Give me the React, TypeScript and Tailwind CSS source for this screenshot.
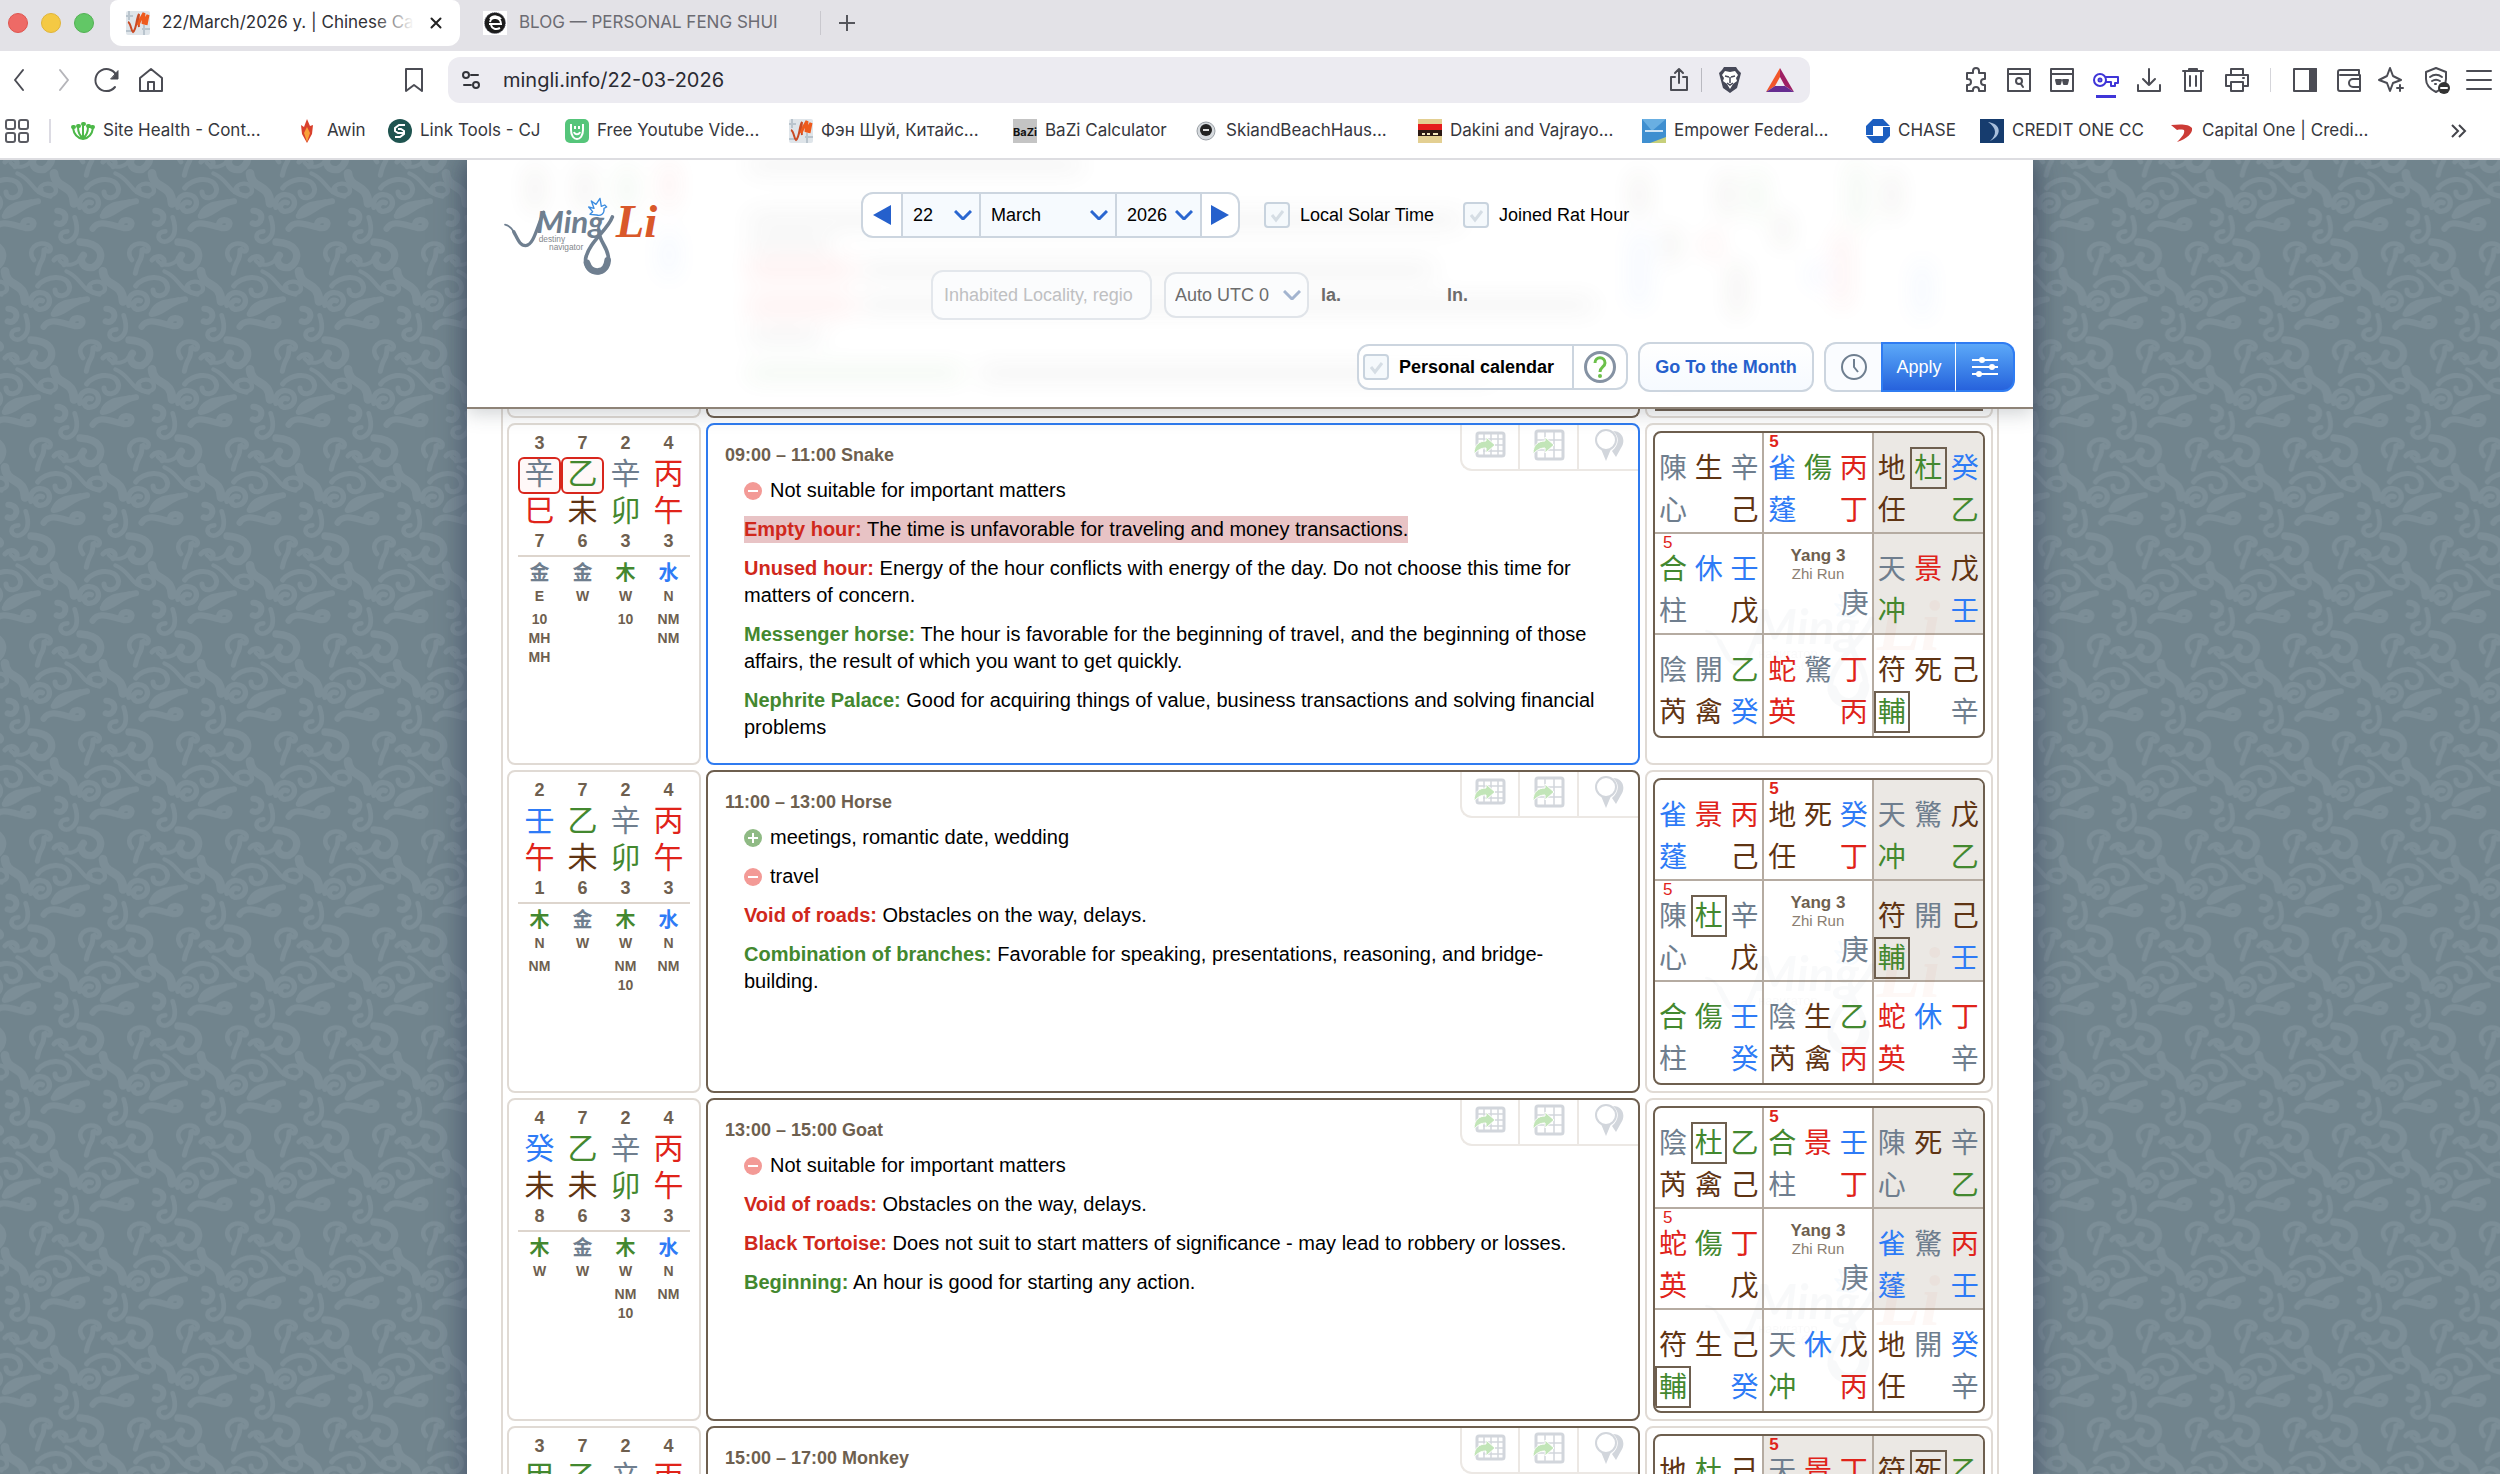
import { ReactNode } from 'react';
import clsx from 'clsx';

const CHAR_COLORS: Record<string, string> = {
  'text-[#6f7e8e]': '辛庚陳心柱陰開驚天金',
  'text-[#5f3413]': '生己戊地任符死芮禽未',
  'text-[#2e7bf6]': '壬癸雀蓬休水',
  'text-[#43882f]': '乙甲傷杜合冲輔卯木',
  'text-[#e0231a]': '丙丁巳午景蛇英',
};

const colorOf = (char: string) =>
  Object.keys(CHAR_COLORS).find((cls) => CHAR_COLORS[cls].includes(char)) ?? '';

interface Pillar {
  top: string;
  stem: string;
  branch: string;
  bottom: string;
  element: string;
  marks: string[];
  boxed?: boolean;
}

interface Note {
  kind: 'good' | 'bad' | 'plus' | 'minus';
  label?: string;
  text: string;
  highlight?: boolean;
}

interface Palace {
  rows: string[];
  five?: 'bold' | 'plain';
  shaded?: boolean;
  boxed?: string;
}

interface Hour {
  title: string;
  active?: boolean;
  pillars: Pillar[];
  notes: Note[];
  palaces: Palace[];
}

const DAY: Pillar = { top: '7', stem: '乙', branch: '未', bottom: '6', element: '金', marks: ['W'] };
const MONTH: Pillar = { top: '2', stem: '辛', branch: '卯', bottom: '3', element: '木', marks: ['W', 'NM', '10'] };
const YEAR: Pillar = { top: '4', stem: '丙', branch: '午', bottom: '3', element: '水', marks: ['N', 'NM'] };

// palace rows are three columns wide, a space is an empty column
const HOURS: Hour[] = [
  {
    title: '09:00 – 11:00 Snake',
    active: true,
    pillars: [
      { top: '3', stem: '辛', branch: '巳', bottom: '7', element: '金', marks: ['E', '10', 'MH', 'MH'], boxed: true },
      { ...DAY, boxed: true },
      { ...MONTH, marks: ['W', '10'] },
      { ...YEAR, marks: ['N', 'NM', 'NM'] },
    ],
    notes: [
      { kind: 'minus', text: 'Not suitable for important matters' },
      { kind: 'bad', label: 'Empty hour:', text: 'The time is unfavorable for traveling and money transactions.', highlight: true },
      { kind: 'bad', label: 'Unused hour:', text: 'Energy of the hour conflicts with energy of the day. Do not choose this time for matters of concern.' },
      { kind: 'good', label: 'Messenger horse:', text: 'The hour is favorable for the beginning of travel, and the beginning of those affairs, the result of which you want to get quickly.' },
      { kind: 'good', label: 'Nephrite Palace:', text: 'Good for acquiring things of value, business transactions and solving financial problems' },
    ],
    palaces: [
      { rows: ['陳生辛', '心 己'] },
      { rows: ['雀傷丙', '蓬 丁'], five: 'bold' },
      { rows: ['地杜癸', '任 乙'], shaded: true, boxed: '杜' },
      { rows: ['合休壬', '柱 戊'], five: 'plain' },
      { rows: [] },
      { rows: ['天景戊', '冲 壬'], shaded: true },
      { rows: ['陰開乙', '芮禽癸'] },
      { rows: ['蛇驚丁', '英 丙'] },
      { rows: ['符死己', '輔 辛'], boxed: '輔' },
    ],
  },
  {
    title: '11:00 – 13:00 Horse',
    pillars: [
      { top: '2', stem: '壬', branch: '午', bottom: '1', element: '木', marks: ['N', 'NM'] },
      DAY,
      MONTH,
      YEAR,
    ],
    notes: [
      { kind: 'plus', text: 'meetings, romantic date, wedding' },
      { kind: 'minus', text: 'travel' },
      { kind: 'bad', label: 'Void of roads:', text: 'Obstacles on the way, delays.' },
      { kind: 'good', label: 'Combination of branches:', text: 'Favorable for speaking, presentations, reasoning, and bridge-building.' },
    ],
    palaces: [
      { rows: ['雀景丙', '蓬 己'] },
      { rows: ['地死癸', '任 丁'], five: 'bold' },
      { rows: ['天驚戊', '冲 乙'], shaded: true },
      { rows: ['陳杜辛', '心 戊'], five: 'plain', boxed: '杜' },
      { rows: [] },
      { rows: ['符開己', '輔 壬'], shaded: true, boxed: '輔' },
      { rows: ['合傷壬', '柱 癸'] },
      { rows: ['陰生乙', '芮禽丙'] },
      { rows: ['蛇休丁', '英 辛'] },
    ],
  },
  {
    title: '13:00 – 15:00 Goat',
    pillars: [
      { top: '4', stem: '癸', branch: '未', bottom: '8', element: '木', marks: ['W'] },
      DAY,
      MONTH,
      YEAR,
    ],
    notes: [
      { kind: 'minus', text: 'Not suitable for important matters' },
      { kind: 'bad', label: 'Void of roads:', text: 'Obstacles on the way, delays.' },
      { kind: 'bad', label: 'Black Tortoise:', text: 'Does not suit to start matters of significance - may lead to robbery or losses.' },
      { kind: 'good', label: 'Beginning:', text: 'An hour is good for starting any action.' },
    ],
    palaces: [
      { rows: ['陰杜乙', '芮禽己'], boxed: '杜' },
      { rows: ['合景壬', '柱 丁'], five: 'bold' },
      { rows: ['陳死辛', '心 乙'], shaded: true },
      { rows: ['蛇傷丁', '英 戊'], five: 'plain' },
      { rows: [] },
      { rows: ['雀驚丙', '蓬 壬'], shaded: true },
      { rows: ['符生己', '輔 癸'], boxed: '輔' },
      { rows: ['天休戊', '冲 丙'] },
      { rows: ['地開癸', '任 辛'] },
    ],
  },
  {
    title: '15:00 – 17:00 Monkey',
    pillars: [
      { top: '3', stem: '甲', branch: '', bottom: '', element: '', marks: [] },
      { ...DAY, branch: '', bottom: '', element: '', marks: [] },
      { ...MONTH, branch: '', bottom: '', element: '', marks: [] },
      { ...YEAR, branch: '', bottom: '', element: '', marks: [] },
    ],
    notes: [],
    palaces: [
      { rows: ['地杜己'] },
      { rows: ['天景丁'], five: 'bold', shaded: true },
      { rows: ['符死乙'], shaded: true, boxed: '死' },
    ],
  },
];

/* ---------- browser chrome ---------- */

const Glyph = ({ children }: { children: ReactNode }) => (
  <svg
    viewBox="0 0 28 28"
    className="h-7 w-7 shrink-0"
    fill="none"
    stroke="currentColor"
    strokeWidth="2"
    strokeLinecap="round"
    strokeLinejoin="round"
  >
    {children}
  </svg>
);

interface ToolButtonProps {
  label: string;
  className?: string;
  marked?: boolean;
  children: ReactNode;
}

const ToolButton = ({ label, className, marked, children }: ToolButtonProps) => (
  <button type="button" aria-label={label} className={clsx('relative flex shrink-0 items-center justify-center', className)}>
    <Glyph>{children}</Glyph>
    {marked && <span className="absolute -bottom-1 h-[3px] w-5 bg-current" />}
  </button>
);

const MingIcon = () => (
  <svg viewBox="0 0 24 24" className="h-6 w-6 shrink-0">
    <rect width="24" height="24" rx="2" fill="#dfe5ea" />
    <path d="M0 5h7M3 0v9M16 18h8M18 14v10M0 20h6" stroke="#b9c4cd" strokeWidth="2" />
    <path d="M2 11c3 1 3 9 5 10 4-3 3-14 6-18-1 7-1 9 0 13" fill="none" stroke="#c94a24" strokeWidth="2" />
    <path d="M12 14c2-5 4-9 6-12l-1 11c2-3 3-6 5-9l-2 10" fill="none" stroke="#ee5a1d" strokeWidth="3" />
  </svg>
);

const TabBar = () => (
  <div className="flex h-[51px] items-start bg-[#e3e2e7] pl-2">
    <div className="mr-4 flex h-[46px] items-center gap-[13px]">
      <span className="h-5 w-5 rounded-full border border-[#df554f] bg-[#ee6a66]" />
      <span className="h-5 w-5 rounded-full border border-[#e0b43a] bg-[#f4c944]" />
      <span className="h-5 w-5 rounded-full border border-[#52b153] bg-[#62c766]" />
    </div>
    <div className="flex h-[46px] w-[350px] items-center rounded-b-xl rounded-t-lg bg-white pl-4 pr-3">
      <MingIcon />
      <span className="relative ml-3 w-[252px] overflow-hidden whitespace-nowrap text-[17px] text-[#2f3036]">
        22/March/2026 y. | Chinese Ca
        <span className="absolute inset-y-0 right-0 w-10 bg-gradient-to-r from-white/0 to-white" />
      </span>
      <button type="button" aria-label="Close tab" className="ml-4">
        <svg viewBox="0 0 12 12" className="h-3 w-3" stroke="#222" strokeWidth="2" strokeLinecap="round">
          <path d="M1.500 1.500l9 9M10.500 1.500l-9 9" />
        </svg>
      </button>
    </div>
    <div className="flex h-[46px] w-[360px] items-center pl-[23px]">
      <svg viewBox="0 0 24 24" className="h-6 w-6 shrink-0">
        <rect width="24" height="24" fill="#fff" />
        <circle cx="12" cy="12" r="10.500" fill="#1c1c1c" stroke="#667" strokeDasharray="1 1" />
        <path d="M6 13h12c0-7-10-8-11-2M7 8c3-4 9-3 11 0M17 17c-4 2-8 1-9-3" fill="none" stroke="#fff" strokeWidth="2" />
      </svg>
      <span className="ml-3 text-[17px] text-[#6c6c73]">BLOG — PERSONAL FENG SHUI</span>
    </div>
    <div className="flex h-[46px] items-center">
      <span className="h-6 w-px bg-[#c9c8ce]" />
      <button type="button" aria-label="New tab" className="ml-[18px]">
        <svg viewBox="0 0 16 16" className="h-4 w-4" stroke="#55565c" strokeWidth="2">
          <path d="M8 0v16M0 8h16" />
        </svg>
      </button>
    </div>
  </div>
);

const Toolbar = () => (
  <div className="flex h-[58px] items-center bg-white text-[#4b4c54]">
    <ToolButton label="Back" className="w-10">
      <path d="M17 4L9 14l8 10" />
    </ToolButton>
    <ToolButton label="Forward" className="w-[46px] text-[#b5b5ba]">
      <path d="M11 4l8 10-8 10" />
    </ToolButton>
    <ToolButton label="Reload" className="w-[42px]">
      <path d="M22 21a11 11 0 1 1 2-10" />
      <path d="M25 5v8h-7z" fill="currentColor" strokeWidth="1" />
    </ToolButton>
    <ToolButton label="Home" className="w-[46px]">
      <path d="M3 12L14 3l11 9v13H3zM11 25v-9h6v9" />
    </ToolButton>
    <ToolButton label="Bookmark this page" className="ml-auto mr-5 w-7">
      <path d="M6 3h16v22l-8-6-8 6z" />
    </ToolButton>
    <div className="flex h-[46px] w-[1362px] items-center rounded-xl bg-[#ecebf1] pl-[13px] pr-4">
      <svg viewBox="0 0 20 20" className="h-5 w-5 shrink-0" fill="none" stroke="#33343a" strokeWidth="2" strokeLinecap="round">
        <circle cx="5" cy="5" r="3" />
        <path d="M10 5h7M3 15h7" />
        <circle cx="15" cy="15" r="3" />
      </svg>
      <label htmlFor="address" className="sr-only">
        Address
      </label>
      <input
        id="address"
        defaultValue="mingli.info/22-03-2026"
        className="ml-[22px] min-w-0 flex-1 bg-transparent text-xl text-[#2b2c33] outline-none"
      />
      <ToolButton label="Share" className="w-7">
        <path d="M10 11H6v13h16V11h-4M14 17V3M10 7l4-4 4 4" />
      </ToolButton>
      <span className="ml-2 h-6 w-px bg-[#b9b9c0]" />
      <button type="button" aria-label="Brave Shields" className="ml-4">
        <svg viewBox="0 0 24 28" className="h-7 w-6">
          <path d="M6 1h12l2 3 3 3-1 4-3 11-7 5-7-5L2 11 1 7l3-3z" fill="#464858" />
          <path d="M12 6l5-1 3 4-2 3 1 3-4 3-3 5-3-5-4-3 1-3-2-3 3-4z" fill="#fff" />
          <path d="M7 10l4 1M17 10l-4 1M12 11v6M9 17l3 2 3-2" stroke="#464858" strokeWidth="1.500" fill="none" />
        </svg>
      </button>
      <button type="button" aria-label="Brave Rewards" className="ml-6">
        <svg viewBox="0 0 28 24" className="h-6 w-7">
          <path d="M14 0L0 24l9-6 5-9z" fill="#f1552b" />
          <path d="M14 0l14 24-9-6-5-9z" fill="#9e1f63" />
          <path d="M0 24h28l-9-6H9z" fill="#662d91" />
        </svg>
      </button>
    </div>
    <div className="ml-[145px] flex items-center">
      <ToolButton label="Extensions" className="w-[42px]">
        <path d="M5 7h6V5a3 3 0 0 1 6 0v2h6v6h-1a3 3 0 0 0 0 6h1v6h-6v-1a3 3 0 0 0-6 0v1H5v-6h1a3 3 0 0 0 0-6H5z" />
      </ToolButton>
      <ToolButton label="Search tabs" className="w-[43px]">
        <path d="M3 3h22v22H3zM3 8h22" />
        <circle cx="14" cy="15" r="3" />
        <path d="M16 18l2 3" />
      </ToolButton>
      <ToolButton label="Private window" className="w-[44px]">
        <path d="M3 3h22v22H3zM3 8h22" />
        <path d="M8 14h5l-1 4H9zM15 14h5l-1 4h-3z" fill="currentColor" />
      </ToolButton>
      <ToolButton label="Passwords" marked className="w-[43px] text-[#3f35d8]">
        <circle cx="8" cy="14" r="6" />
        <circle cx="8" cy="14" r="1.500" />
        <path d="M14 11h12v6h-3v3h-4v-4h-5" />
      </ToolButton>
      <ToolButton label="Downloads" className="w-[44px]">
        <path d="M14 3v16M8 13l6 6 6-6M3 19v6h22v-6" />
      </ToolButton>
      <ToolButton label="Delete" className="w-[44px]">
        <path d="M4 5h20M10 5V3h8v2M6 5v20h16V5M11 10v10M17 10v10" />
      </ToolButton>
      <ToolButton label="Print" className="w-[43px]">
        <path d="M8 9V3h12v6M8 20H3V9h22v11h-5M8 16h12v9H8zM20 12h1" />
      </ToolButton>
      <span className="mx-3 h-6 w-px bg-[#d5d5da]" />
      <ToolButton label="Sidebar" className="w-[44px]">
        <path d="M3 3h22v22H3z" />
        <path d="M19 3h6v22h-6z" fill="currentColor" />
      </ToolButton>
      <ToolButton label="Wallet" className="w-[43px]">
        <path d="M24 9V4H5a2 2 0 0 0-2 2v17a2 2 0 0 0 2 2h20V9H5M25 13h-7a4 4 0 0 0 0 8h7" />
      </ToolButton>
      <ToolButton label="Leo" className="w-[44px]">
        <path d="M12 2l3 8 8 4-8 3-3 8-3-8-8-3 8-4zM22 19v6M19 22h6" />
      </ToolButton>
      <ToolButton label="VPN" className="w-[44px]">
        <path d="M14 2l10 4v7c0 6-4 10-10 13C8 23 4 19 4 13V6zM8 11c4-3 8-3 12 0M10 15c3-2 5-2 8 0M13 18h1" />
        <circle cx="22" cy="22" r="6" fill="#333" stroke="none" />
        <path d="M19 22h6" stroke="#fff" />
      </ToolButton>
      <ToolButton label="Menu" className="w-[42px]">
        <path d="M2 5h24M2 14h24M2 23h24" />
      </ToolButton>
    </div>
  </div>
);

const FAVICONS: Record<string, ReactNode> = {
  site: (
    <g fill="none" stroke="#4cb848" strokeWidth="2" strokeLinecap="round">
      <path d="M2 9c1 7 4 10 10 11 6-1 9-4 10-11M7 8c0 6 2 9 5 11 3-2 5-5 5-11M12 7v12" />
      <path d="M2 8h1M7 7h1M12 5h1M17 7h1M21 8h1" strokeWidth="4" />
    </g>
  ),
  awin: (
    <>
      <path d="M12 0l3 7 3-1-1 9-5 9-5-9-1-9 3 2z" fill="#d9402c" />
      <path d="M12 8l3 6-3 9-3-9z" fill="#f9a13a" />
    </>
  ),
  cj: (
    <>
      <circle cx="12" cy="12" r="12" fill="#1f5450" />
      <path d="M17 6h-6l-4 3v3l3 2h5M7 18h5l4-3v-3l-3-2h-3" fill="none" stroke="#fff" strokeWidth="2" />
    </>
  ),
  free: (
    <>
      <rect width="24" height="24" rx="5" fill="#55c57a" />
      <path d="M6 5v6c0 12 12 12 12 0V5M10 7v3M14 7v3M9 13c1 3 5 3 6 0" fill="none" stroke="#fff" strokeWidth="2" />
    </>
  ),
  bazi: (
    <>
      <rect width="24" height="24" fill="#c4c4c4" />
      <text x="12" y="17" fontSize="11" fontWeight="700" textAnchor="middle" fill="#111">
        BaZi
      </text>
    </>
  ),
  ski: (
    <>
      <circle cx="12" cy="12" r="9" fill="#d6dade" stroke="#9aa0a6" />
      <circle cx="12" cy="11" r="6" fill="#222" />
      <path d="M9 11h6" stroke="#ddd" strokeWidth="2" />
    </>
  ),
  dakini: (
    <>
      <rect width="24" height="24" fill="#e3cf92" />
      <path d="M0 5h24v6H0z" fill="#e51c1c" />
      <path d="M0 11h24v6H0z" fill="#2c1a14" />
      <path d="M4 15h3M9 15h3M15 15h5" stroke="#f4e7bd" strokeWidth="2" />
    </>
  ),
  empower: (
    <>
      <rect width="24" height="24" fill="#3f8fd0" />
      <path d="M0 0h24L10 12z" fill="#69afe2" />
      <path d="M8 24l16-6v6z" fill="#c6cf7a" />
      <path d="M3 12h18" stroke="#cfe4f5" strokeWidth="2" />
    </>
  ),
  chase: (
    <>
      <path d="M7 0h10l7 7H7zM24 8v9l-7 7V8zM17 24H7l-7-7h17zM0 16V7l7-7v16z" fill="#1d5fc0" />
      <path d="M8 8h8v8H8z" fill="#fff" />
    </>
  ),
  credit: (
    <>
      <rect width="24" height="24" fill="#163c6e" />
      <path d="M8 3c14 2 14 14 2 19 7-6 7-13-2-19z" fill="#a9bfdb" />
    </>
  ),
  capital: <path d="M1 6c10-1 18-1 21 3 1 5-5 11-15 14 6-6 8-9 7-12-4-1-7 0-7 0z" fill="#cc3b36" />,
};

const BOOKMARKS = [
  { icon: 'site', name: 'Site Health - Cont...', width: 'w-[224px]' },
  { icon: 'awin', name: 'Awin', width: 'w-[93px]' },
  { icon: 'cj', name: 'Link Tools - CJ', width: 'w-[177px]' },
  { icon: 'free', name: 'Free Youtube Vide...', width: 'w-[224px]' },
  { icon: 'ming', name: 'Фэн Шуй, Китайс...', width: 'w-[224px]' },
  { icon: 'bazi', name: 'BaZi Calculator', width: 'w-[181px]' },
  { icon: 'ski', name: 'SkiandBeachHaus...', width: 'w-[224px]' },
  { icon: 'dakini', name: 'Dakini and Vajrayo...', width: 'w-[224px]' },
  { icon: 'empower', name: 'Empower Federal...', width: 'w-[224px]' },
  { icon: 'chase', name: 'CHASE', width: 'w-[114px]' },
  { icon: 'credit', name: 'CREDIT ONE CC', width: 'w-[190px]' },
  { icon: 'capital', name: 'Capital One | Credi...', width: 'w-[224px]' },
];

const BookmarksBar = () => (
  <nav className="flex h-[51px] items-center border-b-2 border-[#dddde1] bg-white pb-[6px] text-[17px] text-[#36373d]">
    <svg viewBox="0 0 24 24" className="ml-[5px] h-6 w-6 shrink-0" fill="none" stroke="#5a5b62" strokeWidth="2">
      <rect x="1" y="1" width="9" height="9" rx="2" />
      <rect x="14" y="1" width="9" height="9" rx="2" />
      <rect x="1" y="14" width="9" height="9" rx="2" />
      <rect x="14" y="14" width="9" height="9" rx="2" />
    </svg>
    <span className="ml-5 mr-5 h-6 w-[2px] bg-[#dcdbe3]" />
    {BOOKMARKS.map((b) => (
      <a key={b.name} href={`#${b.icon}`} className={clsx('flex shrink-0 items-center gap-2 whitespace-nowrap', b.width)}>
        {b.icon === 'ming' ? (
          <MingIcon />
        ) : (
          <svg viewBox="0 0 24 24" className="h-6 w-6 shrink-0">
            {FAVICONS[b.icon]}
          </svg>
        )}
        {b.name}
      </a>
    ))}
    <button type="button" aria-label="More bookmarks" className="ml-auto mr-[33px]">
      <svg viewBox="0 0 16 14" className="h-[14px] w-4" fill="none" stroke="#44454b" strokeWidth="2">
        <path d="M1 1l6 6-6 6M8 1l6 6-6 6" />
      </svg>
    </button>
  </nav>
);

/* ---------- page ---------- */

const Swirls = () => (
  <g fill="none" stroke="#7c8e97" strokeLinecap="round" strokeWidth="15">
    <path d="M112 88c-4 22 42 24 44 4 0-30-50-28-52 4" strokeWidth="13" />
    <path d="M262 128c-22-8-30 26-6 26 40-4 34-54-4-50-18 2-30 20-24 38" strokeWidth="16" />
    <path d="M150 40c4 50 60 30 60 90" strokeWidth="26" />
    <path d="M248 84c20-30 90-40 96 4 0 30-44 34-44 8" />
    <path d="M296 168c30 0 60-40 100-44M300 160c16-30 50-26 76-34" strokeWidth="18" />
    <path d="M266 206c24-40 90 10 110-4 22-20-20-30-24-12" strokeWidth="19" />
    <path d="M160 152c40 2 24 50-2 38" strokeWidth="18" />
    <path d="M190 214c-30 0-26 36 4 30 34-14 24-54 18-72" strokeWidth="14" />
    <path d="M90 300c-24-30 10-60 40-46 20 10 6 30-6 14" strokeWidth="14" />
    <path d="M228 246c80 6 70 60 40 76-30 6-44-20-30-36" strokeWidth="22" />
    <path d="M20 8c20 24 60 8 60-8M40 40c50 20 40 60 100 70" strokeWidth="12" />
    <path d="M150 300c20-24 50 0 30 14M100 340c10-50 20-30 20-70" strokeWidth="15" />
  </g>
);

const SWIRL_OFFSETS = [
  [0, 0],
  [-294, 0],
  [147, 294],
  [-147, 294],
  [-441, 294],
  [147, -294],
  [-147, -294],
];

const Backdrop = () => (
  <svg className="absolute inset-0 h-full w-full" aria-hidden="true">
    <defs>
      <pattern id="swirl" width="294" height="588" patternUnits="userSpaceOnUse" patternTransform="translate(4 0) scale(0.3333)">
        <rect width="294" height="588" fill="#71848d" />
        {SWIRL_OFFSETS.map(([x, y]) => (
          <g key={`${x},${y}`} transform={`translate(${x} ${y})`}>
            <Swirls />
          </g>
        ))}
      </pattern>
    </defs>
    <rect width="100%" height="100%" fill="url(#swirl)" />
  </svg>
);

const Logo = ({ className, lines }: { className?: string; lines: [string, string] }) => (
  <svg viewBox="0 0 540 300" className={className} role="img" aria-label="Ming Li">
    <g fill="none" stroke="#6f7f90" strokeLinecap="round">
      <path d="M30 119c12 2 20 10 28 24" strokeWidth="5" />
      <path d="M56 140c12 22 18 42 36 42 24-2 32-50 54-100" strokeWidth="10" />
      <path d="M352 96c-14 40-70 74-80 124-6 60 74 56 68-4-4-34-26-44-28-76" strokeWidth="11" />
      <path d="M276 234c12 36 58 34 62-8" strokeWidth="20" />
    </g>
    <text x="124" y="144" fontSize="94" fontStyle="italic" fontWeight="700" fill="#6f7f90" fontFamily="Lato, sans-serif">
      Ming
    </text>
    <text x="362" y="155" fontSize="140" fontStyle="italic" fontWeight="700" fill="#d9582a" fontFamily="'Liberation Serif', serif">
      Li
    </text>
    <path
      d="M281 66l16 4-8-22 14 10 12-18 4 24 10-4 6 6-8 4c2 16-10 24-22 20l-20-2 8-8z"
      fill="#fff"
      stroke="#3b8ce0"
      strokeWidth="4"
      strokeLinejoin="round"
    />
    <g fill="#84878c" fontSize="25" fontFamily="'Liberation Sans', sans-serif">
      <text x="131" y="171">{lines[0]}</text>
      <text x="162" y="194">{lines[1]}</text>
    </g>
  </svg>
);

// rows scrolled under the translucent header
const HeaderGhosts = () => (
  <svg className="absolute inset-0 h-full w-full" aria-hidden="true">
    <defs>
      <filter id="soft" x="-20%" y="-50%" width="140%" height="200%">
        <feGaussianBlur stdDeviation="11" />
      </filter>
    </defs>
    <g filter="url(#soft)" strokeLinecap="round" strokeWidth="16" opacity="0.06">
      <path d="M68 14v30M118 14v30M1172 20v30M1260 20v30M1425 20v30M1203 75v20M1316 60v20M1270 110v40" stroke="#4a3a28" />
      <path d="M160 14v30M1290 20v30M1390 10v50" stroke="#3c9430" />
      <path d="M202 10v30M1375 80v60M1245 80v10M1200 212h20" stroke="#e33" />
      <path d="M202 80v30M1172 80v60M1455 110v40M1350 110v10" stroke="#48f" />
      <path d="M288 5h320M288 60h700M288 85h70M400 110h560M400 145h720M288 175h60M520 213h500" stroke="#555" />
      <path d="M288 110h90M288 145h90" stroke="#f22" strokeWidth="20" />
      <path d="M288 213h200" stroke="#3c9430" />
    </g>
  </svg>
);

const Chevron = ({ className }: { className?: string }) => (
  <svg viewBox="0 0 18 10" className={clsx('pointer-events-none absolute h-[10px] w-[18px]', className)} fill="none" strokeWidth="3">
    <path d="M1 1l8 8 8-8" stroke="currentColor" />
  </svg>
);

const DateSelect = ({ label, value, className }: { label: string; value: string; className: string }) => (
  <label className={clsx('relative flex items-center border-r-2 border-[#ccd5df] bg-[#f6fafe]', className)}>
    <span className="sr-only">{label}</span>
    <select className="h-full w-full appearance-none bg-transparent pl-[10px] text-lg text-black" defaultValue={value}>
      <option>{value}</option>
    </select>
    <Chevron className="right-[7px] text-[#2a66d0]" />
  </label>
);

const Check = ({ label, bold }: { label: string; bold?: boolean }) => (
  <label className={clsx('flex items-center gap-[10px] text-lg text-black', bold && 'font-bold')}>
    <span className="relative flex">
      <input type="checkbox" className="h-[26px] w-[26px] appearance-none rounded border-2 border-[#c8d3de] bg-[#f5f9fc]" />
      <svg viewBox="0 0 26 26" className="pointer-events-none absolute inset-0" fill="none" stroke="#d5dde4" strokeWidth="3">
        <path d="M8 13l4 5 7-9" />
      </svg>
    </span>
    {label}
  </label>
);

const Header = () => (
  <header className="relative border-b-2 border-[#8e8377] bg-white shadow-[0_4px_18px_rgba(60,70,80,0.25)]">
    <HeaderGhosts />
    <div className="relative flex">
      <div className="w-[394px] shrink-0 pl-7 pt-[25px]">
        <Logo className="h-[100px] w-[180px]" lines={['destiny', 'navigator']} />
      </div>
      <div className="flex flex-1 flex-col pb-[15px] pr-[18px] pt-8">
        <div className="flex items-center">
          <div className="flex h-[46px] overflow-hidden rounded-xl border-2 border-[#ccd5df] bg-white">
            <button type="button" aria-label="Previous day" className="flex w-10 items-center justify-center border-r-2 border-[#ccd5df]">
              <svg viewBox="0 0 18 20" className="h-5 w-[18px]" fill="#2560cc">
                <path d="M18 0v20L0 10z" />
              </svg>
            </button>
            <DateSelect label="Day" value="22" className="w-[78px]" />
            <DateSelect label="Month" value="March" className="w-[136px]" />
            <DateSelect label="Year" value="2026" className="w-[85px]" />
            <button type="button" aria-label="Next day" className="flex w-9 items-center justify-center">
              <svg viewBox="0 0 18 20" className="h-5 w-[18px]" fill="#2560cc">
                <path d="M0 0v20l18-10z" />
              </svg>
            </button>
          </div>
          <div className="ml-[24px] flex gap-[29px]">
            <Check label="Local Solar Time" />
            <Check label="Joined Rat Hour" />
          </div>
        </div>
        <div className="mt-8 flex items-center pl-[70px] text-lg text-[#6c6c6c]">
          <input
            aria-label="Inhabited locality"
            placeholder="Inhabited Locality, regio"
            className="h-[50px] w-[221px] rounded-xl border-2 border-[#e3e7ec] bg-[#fbfcfd] px-[11px] text-lg placeholder:text-[#bfc0c2]"
          />
          <label className="relative ml-3 flex h-[46px] w-[145px] items-center rounded-xl border-2 border-[#e0e4e9] bg-[#fbfcfd]">
            <span className="sr-only">Time zone</span>
            <select className="h-full w-full appearance-none bg-transparent pl-[9px] text-lg text-[#6c6c6c]" defaultValue="auto">
              <option value="auto">Auto UTC 0</option>
            </select>
            <Chevron className="right-[6px] text-[#a3b4cf]" />
          </label>
          <b className="ml-3 w-[126px]">la.</b>
          <b>ln.</b>
        </div>
        <div className="mt-[22px] flex items-center justify-end gap-[10px] text-lg">
          <div className="flex h-[46px] items-stretch rounded-xl border-2 border-[#ccd5df] bg-white/80">
            <div className="flex w-[215px] items-center border-r-2 border-[#ccd5df] pl-1">
              <Check label="Personal calendar" bold />
            </div>
            <button type="button" aria-label="Help" className="w-[52px] pl-[10px]">
              <svg viewBox="0 0 32 32" className="h-8 w-8" fill="none">
                <circle cx="16" cy="16" r="14.500" stroke="#8592a3" strokeWidth="3" />
                <path d="M11 12c0-7 10-7 10 0 0 4-5 4-5 9" stroke="#6cc04a" strokeWidth="3" />
                <circle cx="16" cy="25" r="2" fill="#6cc04a" />
              </svg>
            </button>
          </div>
          <button type="button" className="h-[50px] w-[176px] rounded-xl border-2 border-[#ccd5df] bg-gradient-to-b from-white to-[#f6faff] font-bold text-[#2560cc]">
            Go To the Month
          </button>
          <div className="flex h-[50px]">
            <button type="button" aria-label="Now" className="flex w-[57px] items-center justify-center rounded-l-xl border-2 border-r-0 border-[#ccd5df] bg-[#fafcff]">
              <svg viewBox="0 0 26 26" className="h-[26px] w-[26px]" fill="none" stroke="#6f7f90" strokeWidth="2">
                <circle cx="13" cy="13" r="12" />
                <path d="M13 5v8l4 5" />
              </svg>
            </button>
            <button type="button" className="w-[75px] border-2 border-r border-[#2f7cf2] border-r-white bg-gradient-to-b from-[#5ca8f8] to-[#2762dc] text-white">
              Apply
            </button>
            <button type="button" aria-label="Settings" className="flex w-[59px] items-center justify-center rounded-r-xl border-2 border-l-0 border-[#2f7cf2] bg-gradient-to-b from-[#5ca8f8] to-[#2762dc]">
              <svg viewBox="0 0 28 22" className="h-[22px] w-7" stroke="#fff" strokeWidth="2" fill="#fff">
                <path d="M1 4h26M1 11h26M1 18h26" />
                <circle cx="11" cy="4" r="2" />
                <circle cx="21" cy="11" r="2" />
                <circle cx="8" cy="18" r="2" />
              </svg>
            </button>
          </div>
        </div>
      </div>
    </div>
  </header>
);

const PillarColumn = ({ pillar }: { pillar: Pillar }) => {
  const [direction, ...stars] = pillar.marks;

  return (
    <div className="flex flex-1 flex-col items-center font-bold text-[#6e5f4f]">
      <span className="text-lg leading-5">{pillar.top}</span>
      <span
        className={clsx(
          'mt-1 flex h-[37px] w-full items-center justify-center rounded-md border-2 pb-1 text-[30px] font-normal leading-none',
          pillar.boxed ? 'border-[#d8261c] bg-[#fff8f8]' : 'border-transparent',
          colorOf(pillar.stem),
        )}
      >
        {pillar.stem}
      </span>
      <span className={clsx('flex h-[37px] items-center pb-1 text-[30px] font-normal leading-none', colorOf(pillar.branch))}>
        {pillar.branch}
      </span>
      <span className="text-lg leading-5">{pillar.bottom}</span>
      <span className="mt-1 w-full border-t-2 border-[#ddd5cd]" />
      <span className={clsx('mt-[3px] h-[26px] text-xl leading-[26px]', colorOf(pillar.element))}>{pillar.element}</span>
      <span className="text-sm leading-5">{direction}</span>
      <div className="flex flex-col items-center pt-1">
        {stars.map((mark, i) => (
          <span key={i} className="text-sm leading-[19px]">
            {mark}
          </span>
        ))}
      </div>
    </div>
  );
};

const NoteIcon = ({ plus }: { plus: boolean }) => (
  <svg viewBox="0 0 18 18" className="mr-2 h-[18px] w-[18px] shrink-0" stroke="#fff" strokeWidth="2">
    <circle cx="9" cy="9" r="9" fill={plus ? '#8fba84' : '#f39a96'} stroke="none" />
    <path d={plus ? 'M4 9h10M9 4v10' : 'M4 9h10'} />
  </svg>
);

const NoteLine = ({ note }: { note: Note }) => {
  if (note.kind === 'plus' || note.kind === 'minus') {
    return (
      <li className="flex items-center">
        <NoteIcon plus={note.kind === 'plus'} />
        {note.text}
      </li>
    );
  }

  return (
    <li>
      <span className={clsx(note.highlight && 'inline-block bg-[#e8c3c5]')}>
        <b className={note.kind === 'bad' ? 'text-[#d0281c]' : 'text-[#43882f]'}>{note.label}</b> {note.text}
      </span>
    </li>
  );
};

const CardActions = () => (
  <div className="absolute right-0 top-0 flex h-[46px] divide-x-2 divide-[#ece8e4] rounded-bl-xl border-b-2 border-l-2 border-[#ece8e4] text-[#d2d6dc]">
    <button type="button" aria-label="Add to table" className="flex w-[58px] items-center justify-center pb-1">
      <svg viewBox="0 0 32 28" className="h-7 w-8" fill="none" stroke="currentColor">
        <rect x="3" y="2" width="27" height="23" rx="2" strokeWidth="3" />
        <path d="M3 8h27M9 14h21M9 20h21M10 2v23M17 2v23M24 2v23" strokeWidth="1.500" />
        <path d="M0 23c0-10 6-13 12-13V6l9 8-9 8v-5c-5 0-8 2-12 6z" fill="#c2e5b8" stroke="#fff" />
      </svg>
    </button>
    <button type="button" aria-label="Add to grid" className="flex w-[59px] items-center justify-center pb-1">
      <svg viewBox="0 0 32 32" className="h-8 w-8" fill="none" stroke="currentColor">
        <rect x="3" y="2" width="27" height="28" rx="2" strokeWidth="3" />
        <path d="M3 11h27M3 21h27M12 2v28M21 2v28" strokeWidth="1.500" />
        <path d="M0 25c0-10 6-13 12-13V8l9 8-9 8v-5c-5 0-8 2-12 6z" fill="#c2e5b8" stroke="#fff" />
      </svg>
    </button>
    <button type="button" aria-label="Places" className="flex w-[59px] items-center justify-center pb-1">
      <svg viewBox="0 0 32 34" className="h-[34px] w-8" fill="currentColor">
        <path d="M20 3c10 0 13 10 8 17l-5 9-4-6c7-6 8-14 1-20z" />
        <circle cx="13" cy="12" r="10" fill="#fff" stroke="currentColor" strokeWidth="2" />
        <path d="M8 21h10l-5 12z" />
      </svg>
    </button>
  </div>
);

const PalaceCell = ({ palace, index }: { palace: Palace; index: number }) => {
  const shell = clsx(
    'relative h-[101px] border-[#b5aba1]',
    index % 3 !== 2 && 'border-r-2',
    index < 6 && 'border-b-2',
    palace.shaded && 'bg-[#ebe8e4]',
  );

  if (index === 4) {
    return (
      <div className={clsx(shell, 'flex flex-col items-center pt-3')}>
        <b className="text-[17px] leading-5 text-[#6e5f4f]">Yang 3</b>
        <span className="text-[15px] leading-4 text-[#8b7e71]">Zhi Run</span>
        <span className={clsx('self-end pr-[3px] pt-2 text-[28px] leading-none', colorOf('庚'))}>庚</span>
      </div>
    );
  }

  return (
    <div className={clsx(shell, 'pt-[14px]')}>
      {palace.five && (
        <span className={clsx('absolute top-0 text-[17px] leading-[18px] text-[#e0231a]', palace.five === 'bold' ? 'left-[5px] font-bold' : 'left-2')}>
          5
        </span>
      )}
      {palace.rows.map((row, r) => (
        <div key={r} className="grid h-[42px] grid-cols-3">
          {[...row].map((char, c) => (
            <span
              key={c}
              className={clsx(
                'flex items-center justify-center border-2 pt-[2px] text-[28px] leading-none',
                palace.boxed === char ? 'border-[#6e5f4f]' : 'border-transparent',
                colorOf(char),
              )}
            >
              {char}
            </span>
          ))}
        </div>
      ))}
    </div>
  );
};

const card = 'rounded-lg border-2 bg-white';

const HourRow = ({ hour }: { hour: Hour }) => (
  <section className="grid grid-cols-[194px_minmax(0,1fr)_348px] gap-[5px]">
    <div className={clsx(card, 'flex items-start border-[#e0dad4] px-[9px] pt-2')}>
      {hour.pillars.map((pillar, i) => (
        <PillarColumn key={i} pillar={pillar} />
      ))}
    </div>
    <div className={clsx(card, 'relative pb-[22px] pl-[17px] pr-6 pt-[17px]', hour.active ? 'border-[#2f7bf0]' : 'border-[#6e5f4f]')}>
      <CardActions />
      <h2 className="text-lg font-bold leading-[27px] text-[#6e5f4f]">{hour.title}</h2>
      <ul className="mt-2 flex flex-col gap-3 pl-[19px] text-xl leading-[27px] text-black">
        {hour.notes.map((note) => (
          <NoteLine key={note.text} note={note} />
        ))}
      </ul>
    </div>
    <div className={clsx(card, 'border-[#e0dad4] p-[6px]')}>
      <div className="relative grid grid-cols-3 overflow-hidden rounded-lg border-2 border-[#6e5f4f]">
        {hour.palaces.map((palace, i) => (
          <PalaceCell key={i} palace={palace} index={i} />
        ))}
        {hour.palaces.length === 9 && (
          <Logo className="pointer-events-none absolute bottom-3 left-9 h-[154px] w-[277px] opacity-[0.04]" lines={['навигатор', 'судьбы']} />
        )}
      </div>
    </div>
  </section>
);

const App = () => (
  <div className="flex h-screen flex-col overflow-hidden font-[Inter,'Noto_Sans_CJK_TC',sans-serif]">
    <TabBar />
    <Toolbar />
    <BookmarksBar />
    <main className="relative min-h-0 flex-1 overflow-hidden bg-[#76888f] font-['Liberation_Sans','Noto_Sans_CJK_TC',sans-serif]">
      <Backdrop />
      <div className="relative mx-auto flex min-h-full max-w-[1566px] flex-col bg-white shadow-[0_0_28px_rgba(50,60,90,0.75)]">
        <div className="relative z-10">
          <Header />
        </div>
        <div className="mx-[34px] flex flex-1 flex-col gap-[5px] border-x-2 border-[#e0dad4] px-[4px]">
          <div className="grid h-[9px] grid-cols-[194px_minmax(0,1fr)_348px] gap-[5px]">
            <div className="rounded-b-lg border-2 border-t-0 border-[#e0dad4]" />
            <div className="rounded-b-lg border-2 border-t-0 border-[#6e5f4f]" />
            <div className="rounded-b-lg border-2 border-t-0 border-[#e0dad4] px-2">
              <div className="h-[2px] bg-[#6e5f4f]" />
            </div>
          </div>
          {HOURS.map((hour) => (
            <HourRow key={hour.title} hour={hour} />
          ))}
        </div>
      </div>
    </main>
  </div>
);

export default App;
